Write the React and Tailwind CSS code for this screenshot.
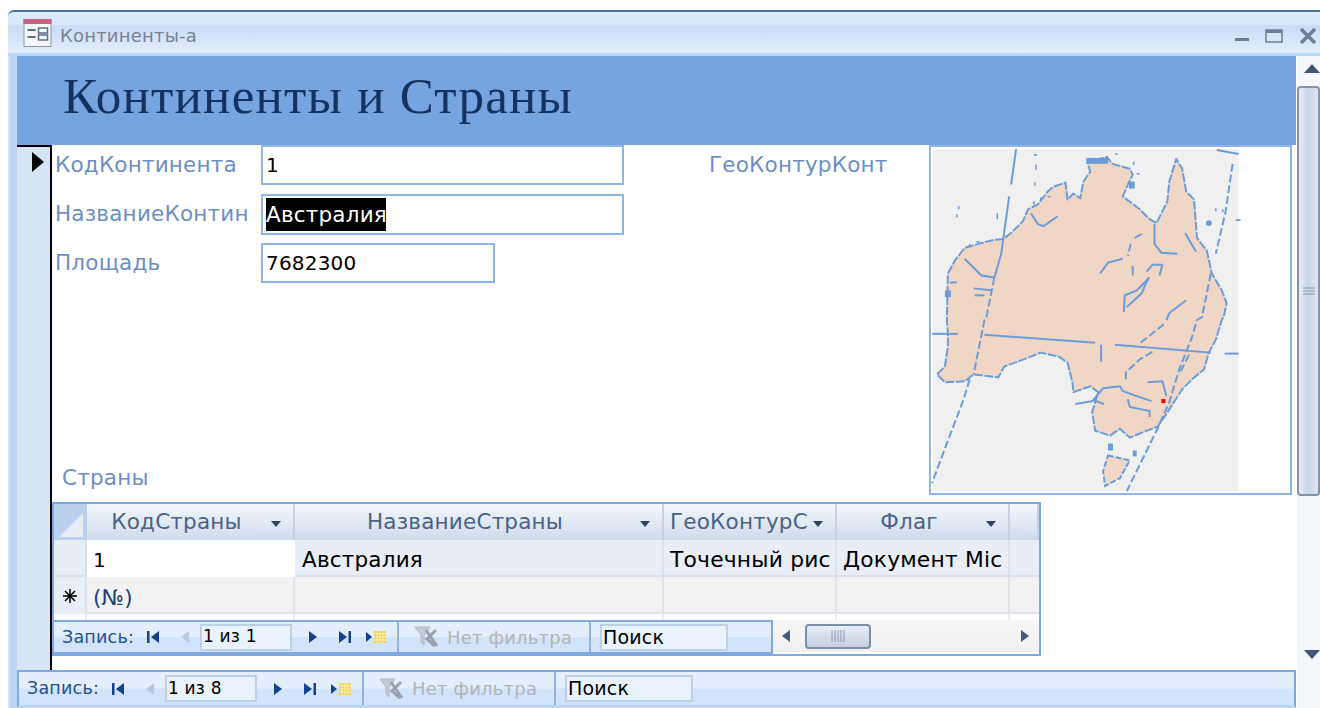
import React from "react";

const uiFont = { fontFamily: '"DejaVu Sans", "Noto Sans", sans-serif' };

// Simple glyphs for the record navigation buttons
const Tri = ({ dir = "r", color = "#15428b", className = "" }) => (
  <svg width="10" height="14" viewBox="0 0 10 14" className={className}>
    <path d={dir === "r" ? "M1 1 L9 7 L1 13 Z" : "M9 1 L1 7 L9 13 Z"} fill={color} />
  </svg>
);

const FirstBtn = () => (
  <svg width="13" height="14" viewBox="0 0 13 14">
    <rect x="0" y="1" width="2.5" height="12" fill="#15428b" />
    <path d="M12 1 L4 7 L12 13 Z" fill="#15428b" />
  </svg>
);

const LastBtn = () => (
  <svg width="13" height="14" viewBox="0 0 13 14">
    <path d="M1 1 L9 7 L1 13 Z" fill="#15428b" />
    <rect x="10.5" y="1" width="2.5" height="12" fill="#15428b" />
  </svg>
);

const NewBtn = () => (
  <svg width="21" height="14" viewBox="0 0 21 14">
    <path d="M0 2 L6 7 L0 12 Z" fill="#15428b" />
    <rect x="8" y="1" width="12" height="12" fill="#f0cf4f" />
    <path d="M8 4 h12 M8 7 h12 M8 10 h12 M11 1 v12 M14 1 v12 M17 1 v12" stroke="#fdf3c0" strokeWidth="1" />
  </svg>
);

const FilterOff = () => (
  <svg width="26" height="24" viewBox="0 0 26 24">
    <path d="M1 2 H16 L10 10 V20 L7 17 V10 Z" fill="#c3cad3" stroke="#aeb6c0" strokeWidth="1" />
    <path d="M12 5 L23 21 M22 5 L13 14 L21 21" fill="none" stroke="#98a1ad" strokeWidth="3" />
  </svg>
);

const NavBar = ({ total, className = "" }) => (
  <div className={`flex items-center h-full bg-[linear-gradient(#e4effe_0%,#e4effe_48%,#d2e4fb_52%,#d2e4fb_100%)] text-[18px] ${className}`}>
    <span className="ml-2 w-[85px] text-[#23508f] text-[17.5px]">Запись:</span>
    <FirstBtn />
    <span className="ml-5 w-5"><Tri dir="l" color="#b5c9e3" /></span>
    <span className="w-[92px] h-[27px] border-2 border-[#bdd0e8] bg-[#e9f2fd] text-black flex items-center pl-[1px] text-[17px]">1 из {total}</span>
    <Tri className="ml-4" />
    <span className="ml-5"><LastBtn /></span>
    <span className="ml-[15px]"><NewBtn /></span>
    <div className="ml-[10px] w-[2px] self-stretch bg-[#8fb4e3]" />
    <span className="ml-[15px]"><FilterOff /></span>
    <span className="ml-[7px] w-[142px] text-[#b3b3b3] whitespace-nowrap">Нет фильтра</span>
    <div className="w-[2px] self-stretch bg-[#8fb4e3]" />
    <span className="ml-[9px] w-[128px] h-[27px] border-2 border-[#bdd0e8] bg-[#e9f2fd] text-black flex items-center pl-[1px] text-[19px]">Поиск</span>
  </div>
);

const HeaderCell = ({ label, arrow = true }) => (
  <div className="relative flex items-center justify-center border-r-2 border-[#c3d1e4] text-[#4a6288] bg-[linear-gradient(#f3f6fb,#dbe4f0_70%,#cfdbe9)] whitespace-nowrap">
    <span className="pr-[27px]">{label}</span>
    {arrow && (
      <svg width="10" height="6" viewBox="0 0 10 6" className="absolute right-[12px] top-[17px]">
        <path d="M0 0 H10 L5 6 Z" fill="#2f4463" />
      </svg>
    )}
  </div>
);

// Map of the continent: land mass with boundary lines and rivers
const AustraliaMap = () => {
  const land =
    "M946 273 L953 260 L963 247 L977 243 L992 239 L1002 238 L1010 232 L1022 220 L1027 208 L1037 203 L1047 190 L1053 185 L1065 181 L1067 198 L1073 192 L1080 197 L1083 180 L1090 170 L1087 160 L1107 155 L1112 162 L1130 167 L1133 173 L1128 183 L1123 195 L1140 208 L1150 218 L1157 222 L1168 200 L1170 180 L1177 157 L1183 167 L1187 190 L1195 198 L1198 237 L1208 250 L1213 273 L1223 290 L1228 303 L1225 317 L1223 320 L1217 340 L1210 353 L1205 370 L1193 380 L1183 390 L1167 415 L1158 428 L1147 432 L1130 439 L1120 430 L1110 437 L1095 432 L1092 413 L1098 393 L1090 387 L1073 393 L1072 383 L1067 363 L1058 357 L1040 353 L1017 362 L1003 367 L997 378 L972 375 L963 382 L943 383 L935 375 L943 367 L946 347 L946 333 L945 320 Z";
  const tas = "M1108 457 L1130 462 L1120 480 L1105 488 L1103 473 Z";
  const solid = [
    "M1015 147 L1010 183",
    "M1008 195 L1002 238 L1000 253 L993 277",
    "M930 334 L956 334",
    "M983 335 L1095 343",
    "M1115 345 L1212 353",
    "M1226 354 L1240 354",
    "M1030 212 L1037 223 L1043 225 L1057 215",
    "M1155 223 L1155 243 L1162 252 L1178 253",
    "M1100 273 L1108 262 L1123 258",
    "M1133 265 L1133 275",
    "M1150 277 L1137 290 L1125 295 L1124 312",
    "M1163 264 L1153 264 L1147 271",
    "M1163 264 L1160 275",
    "M1149 277 L1142 293 L1127 307",
    "M1187 300 L1170 313 L1167 320",
    "M963 258 L980 275 L993 277",
    "M972 288 L990 290",
    "M973 295 L983 295",
    "M948 282 L955 282",
    "M1186 232 L1197 251",
    "M1101 345 L1101 362",
    "M1148 383 L1163 382 L1167 397",
    "M1123 392 L1140 398 L1152 402",
    "M1128 400 L1130 408 L1150 412 L1150 418",
    "M1104 405 L1093 401 L1103 389 L1120 387 L1123 392",
    "M1075 405 L1093 402",
  ];
  const dashed = [
    "M993 277 L985 317 L983 320 L972 375",
    "M968 380 L962 400 L943 450 L930 485",
    "M1234 162 L1227 210 L1217 253",
    "M1212 273 L1203 317 L1198 320 L1193 337 L1180 370 L1170 403 L1158 430 L1127 493",
    "M1141 343 L1166 323",
    "M1126 380 L1126 373 L1140 360 L1153 352",
    "M1142 233 L1133 238",
    "M1131 243 L1128 255",
    "M1190 355 L1180 375",
  ];
  return (
    <svg viewBox="929 145 363 350" className="block w-full h-full">
      <rect x="931" y="147" width="309" height="346" fill="#f0f0f0" />
      <path d={land} fill="#f0d6c5" stroke="#6b9cd8" strokeWidth="2" strokeLinejoin="round" strokeDasharray="9 1.5" />
      <path d={tas} fill="#f0d6c5" stroke="#6b9cd8" strokeWidth="2" strokeDasharray="6 2" />
      <g fill="none" stroke="#6b9cd8" strokeWidth="2">
        {solid.map((d) => <path key={d} d={d} />)}
        {dashed.map((d) => <path key={d} d={d} strokeDasharray="8 3" />)}
      </g>
      <g fill="#6b9cd8">
        <rect x="1086" y="156" width="22" height="6" />
        <rect x="1129" y="180" width="6" height="7" />
        <circle cx="1210" cy="222" r="3" />
        <rect x="1108" y="445" width="5" height="7" />
        <rect x="1133" y="452" width="4" height="6" />
        <rect x="943" y="290" width="6" height="7" />
      </g>
      <path d="M1033 153 h3 M1035 163 v5 M1034 181 v3 M957 205 v3 M955 213 v3 M996 212 v6 M1217 207 v3 M1224 208 v3 M1237 219 h5 M1040 196 v3 M1033 200 v3 M1047 195 h3 M968 243 v3 M975 241 h3 M1115 152 h3 M1134 160 v3 M1137 172 h3" stroke="#6b9cd8" strokeWidth="1.6" />
      <path d="M1218 148 L1240 152" stroke="#6b9cd8" strokeWidth="2" />
      <rect x="1162" y="400" width="4" height="4" fill="#e00000" />
    </svg>
  );
};

export default function App() {
  return (
    <div className="w-[1320px] h-[708px] bg-white overflow-hidden pt-[10px] pl-2 flex flex-col text-[21.5px] tracking-[0.2px]" style={uiFont}>
      {/* window title */}
      <div className="h-[46px] shrink-0 flex items-center border-t-2 border-[#4a6fa0] rounded-tl-md border-b-[3px] border-b-[#bcd6f6] bg-[linear-gradient(#dbe9fc_0%,#dbe9fc_30%,#c9dcf6_34%,#e3eefd_100%)]">
        <svg width="29" height="28" viewBox="0 0 28 28" className="ml-[15px] mr-[8px]">
          <rect x="0.5" y="0.5" width="27" height="27" fill="#f5f7fb" stroke="#8a97aa" />
          <rect x="0" y="0" width="28" height="5" fill="#c9607f" />
          <path d="M4 11 H12 M4 18 H12" stroke="#5d6f88" strokeWidth="2" />
          <rect x="15" y="9" width="9" height="5" fill="none" stroke="#5d6f88" strokeWidth="1.5" />
          <rect x="15" y="16" width="9" height="5" fill="none" stroke="#5d6f88" strokeWidth="1.5" />
        </svg>
        <span className="text-[18px] text-[#7a7f98] pt-[6px]">Континенты-а</span>
        <div className="ml-auto flex items-center pr-[3px] pt-[6px]">
          <svg width="14" height="14" viewBox="0 0 14 14"><rect x="0" y="9" width="14" height="3" fill="#707a8a" /></svg>
          <svg width="18" height="14" viewBox="0 0 18 14" className="ml-[16px]"><rect x="1" y="1" width="16" height="12" fill="#dbe7f6" stroke="#6c7f99" strokeWidth="1.5" /><rect x="1" y="1" width="16" height="3" fill="#6c7f99" /></svg>
          <svg width="18" height="16" viewBox="0 0 18 16" className="ml-[16px]"><path d="M2 1 L16 15 M16 1 L2 15" stroke="#6e8099" strokeWidth="3.5" /></svg>
        </div>
      </div>

      <div className="flex-1 flex min-h-0">
        <div className="w-[9px] shrink-0 bg-[#bcd5f4] border-l-2 border-[#d5e4f8]" />

        {/* form body */}
        <div className="w-[1279px] shrink-0 flex flex-col">
          <div className="h-[89px] shrink-0 bg-[#76a4e0] flex items-center pl-[46px] pb-[9px]">
            <h1 className="text-[51px] leading-none tracking-[1.25px] text-[#14325f]" style={{ fontFamily: '"Liberation Serif", serif' }}>Континенты и Страны</h1>
          </div>

          <div className="h-[525px] shrink-0 flex">
            <div className="w-[35px] shrink-0 bg-[#d6e5f5] border-t-2 border-r-2 border-black pt-[5px] pl-[15px]">
              <svg width="12" height="20" viewBox="0 0 12 20"><path d="M0 0 L12 10 L0 20 Z" fill="#000" /></svg>
            </div>

            <div className="flex-1 flex flex-col bg-white">
              <div className="h-[350px] shrink-0 flex">
                <div className="w-[572px] flex flex-col">
                  <div className="flex h-[40px] items-center">
                    <span className="w-[209px] pl-[3px] text-[#6d8fc6]">КодКонтинента</span>
                    <div className="w-[363px] h-full border-2 border-[#8fb5e8] pl-[3px] flex items-center text-black text-[20px]">1</div>
                  </div>
                  <div className="flex h-[41px] items-center mt-[9px]">
                    <span className="w-[209px] pl-[3px] text-[#6d8fc6] whitespace-nowrap">НазваниеКонтин</span>
                    <div className="w-[363px] h-full border-2 border-[#8fb5e8] pl-[3px] flex items-center">
                      <span className="bg-black text-white h-[33px] w-[120px] leading-[33px] whitespace-nowrap">Австралия</span>
                    </div>
                  </div>
                  <div className="flex h-[40px] items-center mt-[8px]">
                    <span className="w-[209px] pl-[3px] text-[#6d8fc6]">Площадь</span>
                    <div className="w-[234px] h-full border-2 border-[#8fb5e8] pl-[3px] flex items-center text-black text-[20px]">7682300</div>
                  </div>
                  <span className="mt-auto mb-[1px] pl-[10px] text-[#6d8fc6]">Страны</span>
                </div>
                <span className="ml-[85px] w-[220px] pt-[4px] text-[#6d8fc6] whitespace-nowrap">ГеоКонтурКонт</span>
                <div className="w-[363px] h-[350px] border-2 border-[#8fb5e8] overflow-hidden">
                  <AustraliaMap />
                </div>
              </div>

              {/* country sub-datasheet */}
              <div className="mt-[7px] w-[989px] h-[154px] border-2 border-[#7ea9e0] flex flex-col">
                <div className="h-[36px] shrink-0 grid grid-cols-[33px_208px_369px_173px_173px_1fr]">
                  <div className="bg-[#b9d1ee] flex items-end justify-center pb-[3px]">
                    <svg width="24" height="24" viewBox="0 0 24 24"><path d="M24 0 V24 H0 Z" fill="#e7edf5" /></svg>
                  </div>
                  <HeaderCell label="КодСтраны" />
                  <HeaderCell label="НазваниеСтраны" />
                  <div className="relative flex items-center pl-[6px] border-r-2 border-[#c3d1e4] text-[#4a6288] bg-[linear-gradient(#f3f6fb,#dbe4f0_70%,#cfdbe9)] whitespace-nowrap">
                    <span>ГеоКонтурС</span>
                    <svg width="10" height="6" viewBox="0 0 10 6" className="absolute right-[12px] top-[17px]">
                      <path d="M0 0 H10 L5 6 Z" fill="#2f4463" />
                    </svg>
                  </div>
                  <HeaderCell label="Флаг" />
                  <HeaderCell label="" arrow={false} />
                </div>
                <div className="h-[37px] shrink-0 grid grid-cols-[33px_208px_369px_173px_173px_1fr] bg-[#e8edf6] border-b-2 border-[#d9e1ee]">
                  <div className="border-r-2 border-[#d9e1ee]" />
                  <div className="bg-white pl-[6px] pt-[4px] flex items-center text-black text-[20px]">1</div>
                  <div className="border-r-2 border-[#d9e1ee] pl-[7px] pt-[4px] flex items-center text-black">Австралия</div>
                  <div className="border-r-2 border-[#d9e1ee] pl-[6px] pt-[4px] flex items-center text-black whitespace-nowrap text-[21.8px]">Точечный рис</div>
                  <div className="border-r-2 border-[#d9e1ee] pl-[6px] pt-[4px] flex items-center text-black whitespace-nowrap text-[21.8px]">Документ Mic</div>
                  <div />
                </div>
                <div className="h-[37px] shrink-0 grid grid-cols-[33px_208px_369px_173px_173px_1fr] bg-[#f2f2f2] border-b-2 border-[#dfe3ee]">
                  <div className="bg-[#e8edf6] border-r-2 border-[#d9e1ee] flex items-center justify-center">
                    <svg width="16" height="16" viewBox="0 0 16 16"><path d="M8 1 V15 M1 8 H15 M3 3 L13 13 M13 3 L3 13" stroke="#000" strokeWidth="1.5" /></svg>
                  </div>
                  <div className="border-r-2 border-[#dfe3ee] pl-[6px] pt-[5px] flex items-center text-[#1f3f74]">(№)</div>
                  <div className="border-r-2 border-[#dfe3ee]" />
                  <div className="border-r-2 border-[#dfe3ee]" />
                  <div className="border-r-2 border-[#dfe3ee]" />
                  <div />
                </div>
                {/* blank strip under the last row, with the column rules running on */}
                <div className="flex-1 min-h-0 grid grid-cols-[33px_208px_369px_173px_173px_1fr]">
                  <div className="border-r-2 border-[#e8edf6]" />
                  <div className="border-r-2 border-[#e8edf6]" />
                  <div className="border-r-2 border-[#e8edf6]" />
                  <div className="border-r-2 border-[#e8edf6]" />
                  <div className="border-r-2 border-[#e8edf6]" />
                  <div />
                </div>
                <div className="h-[34px] shrink-0 flex">
                  <NavBar total={1} className="w-[719px] shrink-0 border-y-2 border-r-2 border-[#7ea9e0]" />
                  <div className="flex-1 flex items-center bg-[linear-gradient(#f7f7f7,#f0f0f0)] pl-[8px] pr-[9px] mb-[2px]">
                    <Tri dir="l" color="#44597c" />
                    <div className="ml-[14px] w-[66px] h-[25px] border-2 border-[#7d8ea9] rounded-sm bg-[linear-gradient(#e8eef6,#c4d0e0)] flex items-center justify-center">
                      <svg width="14" height="12" viewBox="0 0 14 12"><path d="M1 0 V12 M4 0 V12 M7 0 V12 M10 0 V12 M13 0 V12" stroke="#8d9bb0" strokeWidth="1" /></svg>
                    </div>
                    <Tri className="ml-auto" color="#44597c" />
                  </div>
                </div>
              </div>
            </div>
          </div>

          <div className="h-[38px] shrink-0 border-t-2 border-l-2 border-r-2 border-[#7ea9e0] border-b-[3px] border-b-[#bcd5f4]">
            <NavBar total={8} />
          </div>
        </div>

        {/* vertical scroll bar */}
        <div className="w-[23px] shrink-0 ml-[1px] bg-[#f4f7fb] flex flex-col items-center">
          <svg width="16" height="9" viewBox="0 0 16 9" className="mt-[8px] ml-[6px]"><path d="M0 9 L8 0 L16 9 Z" fill="#3f5478" /></svg>
          <div className="mt-[13px] w-[23px] h-[410px] border-2 border-[#8593a9] rounded-sm bg-[linear-gradient(90deg,#e6ecf5,#c9d5e6_50%,#dfe6f0)] flex items-center justify-center">
            <svg width="12" height="9" viewBox="0 0 12 9"><path d="M0 1 H12 M0 4 H12 M0 7 H12" stroke="#8896ab" strokeWidth="1" /></svg>
          </div>
          <svg width="16" height="9" viewBox="0 0 16 9" className="mt-[154px] ml-[6px]"><path d="M0 0 L8 9 L16 0 Z" fill="#3f5478" /></svg>
        </div>
      </div>
    </div>
  );
}
